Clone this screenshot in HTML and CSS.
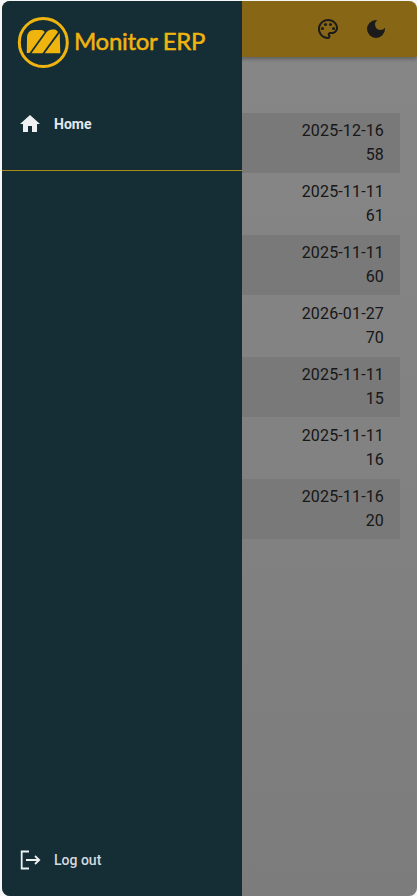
FILE: index.html
```html
<!DOCTYPE html>
<html lang="en">
<head>
<meta charset="utf-8">
<title>Monitor ERP</title>
<link rel="stylesheet" href="styles.css">
</head>
<body>
<div class="app">
  <header class="topbar">
    <button class="icon-btn" aria-label="Theme colours">
      <svg viewBox="0 0 24 24" width="24" height="24"><path fill="currentColor" d="M12 2C6.490 2 2 6.490 2 12s4.490 10 10 10c1.380 0 2.500-1.120 2.500-2.500 0-.610-.230-1.200-.640-1.670-.080-.100-.130-.210-.130-.330 0-.280.220-.500.500-.500H16c3.310 0 6-2.690 6-6 0-4.960-4.490-9-10-9zm4 13h-1.770c-1.380 0-2.500 1.120-2.500 2.500 0 .610.230 1.200.640 1.670.080.100.130.210.130.330 0 .280-.220.500-.500.500-4.410 0-8-3.590-8-8s3.590-8 8-8 8 3.140 8 7c0 2.210-1.790 4-4 4z"/><circle cx="6.500" cy="11.500" r="1.500" fill="currentColor"/><circle cx="9.500" cy="7.500" r="1.500" fill="currentColor"/><circle cx="14.500" cy="7.500" r="1.500" fill="currentColor"/><circle cx="17.500" cy="11.500" r="1.500" fill="currentColor"/></svg>
    </button>
    <button class="icon-btn" aria-label="Dark mode">
      <svg viewBox="0 0 24 24" width="24" height="24"><path fill="currentColor" d="M12 3a9 9 0 1 0 9 9c0-.460-.040-.920-.100-1.360a5.390 5.390 0 0 1-4.400 2.260 5.400 5.400 0 0 1-3.140-9.800c-.440-.060-.900-.100-1.360-.100z"/></svg>
    </button>
  </header>
  <main class="content">
    <table class="data">
      <tbody>
        <tr class="odd"><td><span class="line">2025-12-16</span><span class="line">58</span></td></tr>
        <tr class="even"><td><span class="line">2025-11-11</span><span class="line">61</span></td></tr>
        <tr class="odd"><td><span class="line">2025-11-11</span><span class="line">60</span></td></tr>
        <tr class="even"><td><span class="line">2026-01-27</span><span class="line">70</span></td></tr>
        <tr class="odd"><td><span class="line">2025-11-11</span><span class="line">15</span></td></tr>
        <tr class="even"><td><span class="line">2025-11-11</span><span class="line">16</span></td></tr>
        <tr class="odd"><td><span class="line">2025-11-16</span><span class="line">20</span></td></tr>
      </tbody>
    </table>
  </main>
  <div class="scrim"></div>
  <aside class="drawer">
    <div class="brand">
      <svg class="brand-mark" viewBox="0 0 52 52" width="52" height="52">
        <circle cx="26.300" cy="26.500" r="24" fill="none" stroke="#f0b40f" stroke-width="3"/>
        <path fill="#f0b40f" d="M9.800 37 L10 22 Q10.300 14 17 14 L24 14 Q26.500 14 27.700 16 L12.500 37 Z"/>
        <path fill="#f0b40f" d="M14.500 37.300 L29.700 16 Q31.500 13.500 35 13.500 L38 13.500 Q40 14 41 16 L25.500 37.300 Z"/>
        <path fill="#f0b40f" d="M27.700 37.300 L42.700 17 L43.300 37.300 Z"/>
      </svg>
      <span class="brand-name">Monitor ERP</span>
    </div>
    <nav class="nav">
      <a class="nav-item" href="#">
        <svg viewBox="0 0 24 24" width="24" height="24"><path fill="#eef0f2" d="M10 20v-6h4v6h5v-8h3L12 3 2 12h3v8z"/></svg>
        <span class="nav-label strong">Home</span>
      </a>
    </nav>
    <a class="logout" href="#">
      <svg viewBox="0 0 24 24" width="24" height="24" fill="none" stroke="#eef0f2" stroke-width="1.800"><path d="M11 3.500H3.700v17H11"/><path d="M8 12h13"/><path d="M17 8l4.200 4-4.200 4"/></svg>
      <span class="nav-label">Log out</span>
    </a>
  </aside>
</div>
</body>
</html>
```
FILE: styles.css
```css
* { box-sizing: border-box; }
html, body { margin: 0; height: 100%; background: #f4f6f7; }
body { font-family: Roboto, "Liberation Sans", sans-serif; overflow: hidden; }
.app {
  position: relative;
  width: 415px;
  height: 895px;
  margin: 1px 0 0 2px;
  border-radius: 8px;
  overflow: hidden;
  background: linear-gradient(#ffffff, #ecebeb);
}
.topbar {
  height: 56px;
  background: #ffc22a;
  display: flex;
  justify-content: flex-end;
  align-items: center;
  gap: 24px;
  padding: 0 29px 0 0;
  box-shadow: 0 2px 4px rgba(0,0,0,.3);
  position: relative;
}
.icon-btn {
  width: 24px;
  height: 24px;
  padding: 0;
  border: 0;
  background: none;
  color: #333;
}
.content { padding: 56px 17px 0 0; }
.data { width: 100%; border-collapse: collapse; text-align: right; color: #2e2e2e; font-size: 16px; letter-spacing: .15px; }
.data td { padding: 6px 16px; }
.data .even td { padding: 7px 16px; }
.data .odd td { background: #e4e4e4; }
.line { display: block; line-height: 24px; }
.scrim { position: absolute; inset: 0; background: rgba(0,0,0,.47); }
.drawer {
  position: absolute;
  inset: 0 auto 0 0;
  width: 240px;
  background: #152e36;
  display: flex;
  flex-direction: column;
  color: #e4e8ec;
}
.brand { display: flex; align-items: flex-start; gap: 5px; padding: 15px 0 0 15px; height: 95px; }
.brand-mark { flex: none; }
.brand-name { font-family: Lato, sans-serif; font-size: 24px; font-weight: 400; line-height: 50px; color: #f0b40f; letter-spacing: -.3px; -webkit-text-stroke: .5px #f0b40f; white-space: nowrap; }
.nav { flex: 1; }
.nav-item {
  display: flex;
  align-items: center;
  height: 75px;
  padding: 0 0 18px 16px;
  border-bottom: 1px solid #b08a18;
  color: inherit;
  text-decoration: none;
}
.nav-label { margin-left: 12px; font-size: 14px; line-height: 20px; font-weight: 500; }
.strong { font-weight: 700; }
.logout { display: flex; align-items: center; height: 72px; padding: 0 0 0 16px; color: #d5dadf; text-decoration: none; }
```
